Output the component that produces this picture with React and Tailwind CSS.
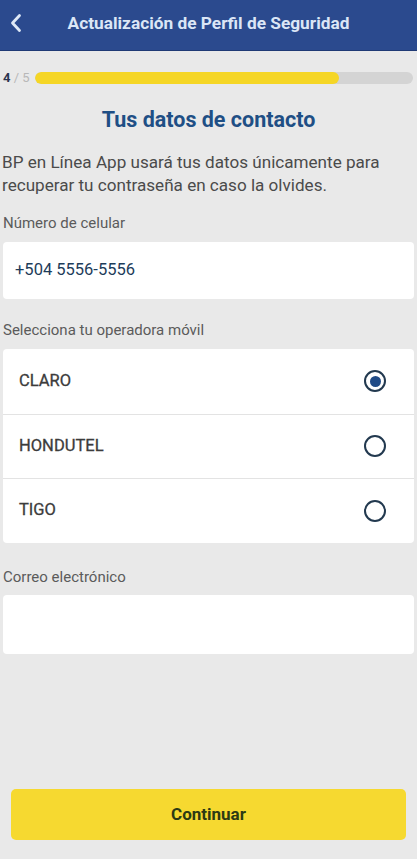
import { useState } from 'react';

const operadoras = ['CLARO', 'HONDUTEL', 'TIGO'];

function Radio({ checked }) {
  return (
    <div className="w-[22px] h-[22px] rounded-full border-2 border-[#22394f] flex items-center justify-center">
      {checked && <div className="w-[11px] h-[11px] rounded-full bg-[#1f4a86]" />}
    </div>
  );
}

export default function App() {
  const [selected, setSelected] = useState('CLARO');

  return (
    <div className="min-h-[859px] bg-[#e9e9e9] flex flex-col font-['Roboto',sans-serif]">
      <div className="h-[51px] bg-[#2b4a8e] border-b border-[#1f3a75] flex items-center relative">
        <svg className="absolute left-[9px] top-[13px]" width="14" height="20" viewBox="0 0 14 20" fill="none">
          <path d="M10.5 2.5 L3.5 10 L10.5 17.5" stroke="#dfe9f7" strokeWidth="2.8" strokeLinecap="round" strokeLinejoin="round" />
        </svg>
        <h1 className="w-full text-center text-[17.3px] font-bold text-[#dbe6f6] -mt-[3px]">
          Actualización de Perfil de Seguridad
        </h1>
      </div>

      <div className="flex items-center gap-[5px] pl-[3px] pr-[4px] mt-[20px]">
        <span className="text-[13px] leading-none">
          <span className="font-bold text-[#2b3550]">4</span>
          <span className="text-[#b8b8b8]"> / 5</span>
        </span>
        <div className="flex-1 h-[12px] rounded-full bg-[#d4d4d4] overflow-hidden">
          <div className="h-full w-[80.5%] rounded-full bg-[#f5d626]" />
        </div>
      </div>

      <h2 className="text-center text-[21.5px] font-bold text-[#1f4f85] mt-[22px] leading-[28px]">
        Tus datos de contacto
      </h2>

      <p className="px-[2px] mt-[17px] text-[17.1px] leading-[23px] text-[#4b4b4b]">
        BP en Línea App usará tus datos únicamente para recuperar tu contraseña en caso la olvides.
      </p>

      <label className="px-[3px] mt-[17px] text-[15px] leading-[18px] text-[#5b5b5b]">
        Número de celular
      </label>
      <div className="mx-[3px] mt-[10px] h-[57px] bg-white rounded-[4px] flex items-center px-[12px]">
        <span className="text-[16.5px] text-[#1d3c5a]">+504 5556-5556</span>
      </div>

      <label className="px-[3px] mt-[22px] text-[15px] leading-[18px] text-[#5b5b5b]">
        Selecciona tu operadora móvil
      </label>
      <div className="mx-[3px] mt-[10px] bg-white rounded-[4px] flex flex-col">
        {operadoras.map((op, i) => (
          <button
            key={op}
            onClick={() => setSelected(op)}
            className={`h-[64.5px] flex items-center justify-between pl-[16px] pr-[28px] text-left ${i > 0 ? 'border-t border-[#e3e3e3]' : ''}`}
          >
            <span className="text-[16.5px] font-normal text-[#3c3c3c] [-webkit-text-stroke:0.3px_#3c3c3c]">{op}</span>
            <Radio checked={selected === op} />
          </button>
        ))}
      </div>

      <label className="px-[3px] mt-[25px] text-[15px] leading-[18px] text-[#5b5b5b]">
        Correo electrónico
      </label>
      <div className="mx-[3px] mt-[9px] h-[59px] bg-white rounded-[4px]" />

      <div className="flex-1" />

      <div className="px-[11px] pb-[19px]">
        <button className="w-full h-[51px] rounded-[5px] bg-[#f6d930] text-[17px] font-bold text-[#2c3a14]">
          Continuar
        </button>
      </div>
    </div>
  );
}
